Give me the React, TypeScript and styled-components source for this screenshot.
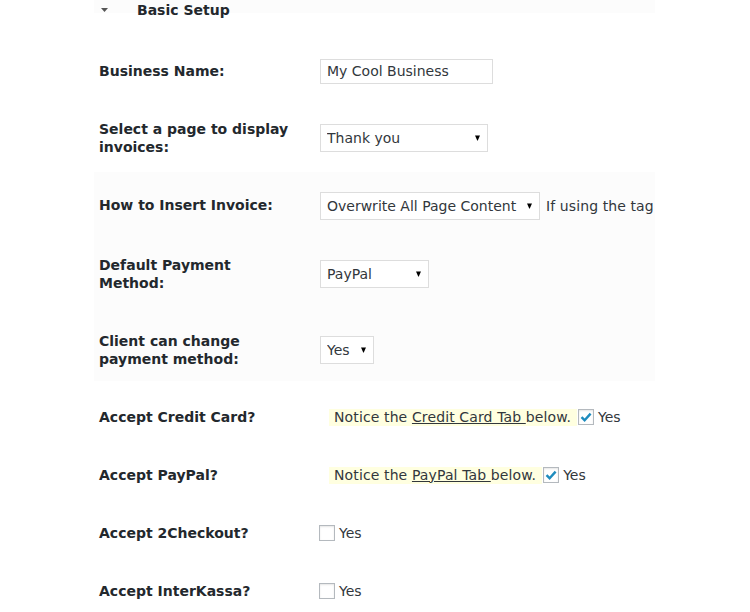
import styled, { createGlobalStyle } from 'styled-components';

const GlobalStyle = createGlobalStyle`
    body {
        margin: 0;
        background: #fff;
        font-family: "DejaVu Sans", Verdana, sans-serif;
        font-size: 14px;
        color: #32373c;
    }
`;

const Page = styled.div`
    width: 561px;
    margin-left: 94px;
    overflow: hidden;
`;

const Header = styled.div`
    height: 13px;
    background: #fcfcfc;
    display: flex;
    align-items: flex-start;
    padding-left: 7px;
    margin-bottom: 29px;
`;

const Caret = styled.svg`
    margin-top: 8px;
    flex: none;
`;

const Title = styled.h3`
    margin: 0 0 0 29px;
    font-size: 14px;
    line-height: 20px;
    font-weight: bold;
    color: #23282d;
`;

const Panel = styled.div`
    margin-top: -4px;
    padding-top: 4px;
    background: linear-gradient(#fcfcfc, #fcfcfc) top / 100% calc(100% - 7px) no-repeat;
`;

const Row = styled.div`
    display: grid;
    grid-template-columns: 210px 1fr;
    padding-left: 5px;
`;

const Label = styled.div`
    padding: 20px 15px 20px 0;
    line-height: 18px;
    font-weight: bold;
    color: #23282d;
`;

const Field = styled.div`
    padding: 15px 10px;
    display: flex;
    align-items: center;
    white-space: nowrap;
    line-height: 18px;
    min-width: 0;
`;

const TextInput = styled.input`
    width: 173px;
    height: 25px;
    box-sizing: border-box;
    margin: 1px;
    padding: 0 6px;
    border: 1px solid #ddd;
    background: #fff;
    font: inherit;
    color: #32373c;
    outline: none;
`;

const SelectWrap = styled.span`
    position: relative;
    display: inline-flex;
    margin: 1px;
`;

const Select = styled.select<{ $width: number }>`
    width: ${(p) => p.$width}px;
    height: 28px;
    box-sizing: border-box;
    padding: 0 18px 0 6px;
    border: 1px solid #ddd;
    border-radius: 0;
    background: #fff;
    font: inherit;
    color: #32373c;
    appearance: none;
    outline: none;
`;

const Arrow = styled.svg`
    position: absolute;
    right: 8px;
    top: 11px;
    pointer-events: none;
`;

const Aside = styled.span`
    margin-left: 5px;
    letter-spacing: 0.1px;
`;

const Notice = styled.span`
    display: inline-block;
    margin-left: 10px;
    padding: 0 6px 0 5px;
    line-height: 17px;
    letter-spacing: 0.12px;
    background: #ffffe0;
`;

const TabLink = styled.a`
    color: inherit;
    text-decoration: underline;
`;

const Box = styled.span<{ $gap: number }>`
    width: 16px;
    height: 16px;
    box-sizing: border-box;
    margin: 0 4px 0 ${(p) => p.$gap}px;
    border: 1px solid #b4b9be;
    background: #fff;
    box-shadow: inset 0 1px 2px rgba(0, 0, 0, 0.1);
    display: inline-flex;
    align-items: center;
    justify-content: center;
    flex: none;
`;

function Dropdown({ value, width }: { value: string; width: number }) {
    return (
        <SelectWrap>
            <Select $width={width} defaultValue={value}>
                <option>{value}</option>
            </Select>
            <Arrow width="5" height="6" viewBox="0 0 5 6">
                <path d="M0 0.5H5L2.5 6Z" fill="#000" />
            </Arrow>
        </SelectWrap>
    );
}

function Check({ checked, gap = 0 }: { checked?: boolean; gap?: number }) {
    return (
        <>
            <Box $gap={gap} role="checkbox" aria-checked={!!checked}>
                {checked && (
                    <svg width="12" height="10" viewBox="0 0 12 10">
                        <path d="M1.5 5.2L4.6 8.2L10.6 1.6" fill="none" stroke="#1e8cbe" strokeWidth="2.4" />
                    </svg>
                )}
            </Box>
            Yes
        </>
    );
}

export default function App() {
    return (
        <>
            <GlobalStyle />
            <Page>
                <Header>
                    <Caret width="7" height="4" viewBox="0 0 7 4">
                        <path d="M0 0H7L3.5 4Z" fill="#555" />
                    </Caret>
                    <Title>Basic Setup</Title>
                </Header>

                <Row>
                    <Label>Business Name:</Label>
                    <Field>
                        <TextInput defaultValue="My Cool Business" />
                    </Field>
                </Row>
                <Row>
                    <Label>Select a page to display invoices:</Label>
                    <Field>
                        <Dropdown value="Thank you" width={168} />
                    </Field>
                </Row>

                <Panel>
                    <Row>
                        <Label>How to Insert Invoice:</Label>
                        <Field>
                            <Dropdown value="Overwrite All Page Content" width={220} />
                            <Aside>If using the tag</Aside>
                        </Field>
                    </Row>
                    <Row>
                        <Label>Default Payment Method:</Label>
                        <Field>
                            <Dropdown value="PayPal" width={109} />
                        </Field>
                    </Row>
                    <Row>
                        <Label>Client can change payment method:</Label>
                        <Field>
                            <Dropdown value="Yes" width={54} />
                        </Field>
                    </Row>
                </Panel>

                <Row>
                    <Label>Accept Credit Card?</Label>
                    <Field>
                        <Notice>
                            Notice the <TabLink href="#">Credit Card Tab </TabLink>below.
                        </Notice>
                        <Check checked gap={1} />
                    </Field>
                </Row>
                <Row>
                    <Label>Accept PayPal?</Label>
                    <Field>
                        <Notice>
                            Notice the <TabLink href="#">PayPal Tab </TabLink>below.
                        </Notice>
                        <Check checked gap={1} />
                    </Field>
                </Row>
                <Row>
                    <Label>Accept 2Checkout?</Label>
                    <Field>
                        <Check />
                    </Field>
                </Row>
                <Row>
                    <Label>Accept InterKassa?</Label>
                    <Field>
                        <Check />
                    </Field>
                </Row>
            </Page>
        </>
    );
}
